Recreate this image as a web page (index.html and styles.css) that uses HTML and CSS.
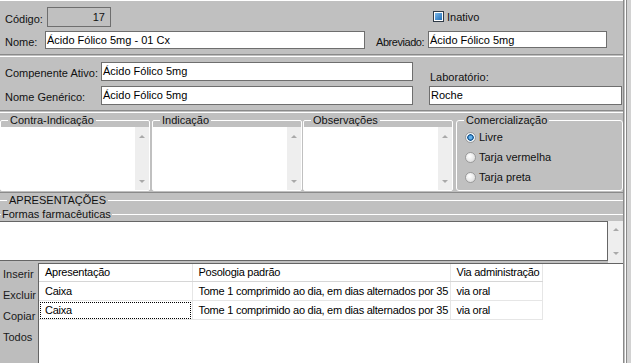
FILE: index.html
```html
<!DOCTYPE html>
<html lang="pt-BR">
<head>
    <meta charset="UTF-8">
    <title>Cadastro de Produto</title>
    <link rel="stylesheet" href="styles.css">
</head>
<body>
    <div class="window">
        <div class="form">
            <!-- dados principais -->
            <div class="panel panel-head">
                <div class="row row-code">
                    <span class="lbl code-lbl">Código:</span>
                    <div class="code-box">17</div>
                    <div class="check">
                        <span class="check-box"><span class="check-fill"></span></span>
                        <span>Inativo</span>
                    </div>
                </div>
                <div class="row row-name">
                    <span class="lbl name-lbl">Nome:</span>
                    <div class="input name-in">Ácido Fólico 5mg - 01 Cx</div>
                    <span class="lbl abrev-lbl">Abreviado:</span>
                    <div class="input abrev-in">Ácido Fólico 5mg</div>
                </div>
            </div>

            <div class="panel panel-mid">
                <span class="lbl">Compenente Ativo:</span>
                <div class="input">Ácido Fólico 5mg</div>
                <span></span>
                <span class="lbl lab-lbl">Laboratório:</span>
                <span class="lbl">Nome Genérico:</span>
                <div class="input">Ácido Fólico 5mg</div>
                <span></span>
                <div class="input">Roche</div>
            </div>

            <div class="panel panel-groups">
                <fieldset class="group g-contra">
                    <legend>Contra-Indicação</legend>
                    <div class="memo">
                        <div class="memo-text"></div>
                        <div class="vscroll"><span class="arrow-up"></span><span class="arrow-down"></span></div>
                    </div>
                </fieldset>
                <fieldset class="group g-ind">
                    <legend>Indicação</legend>
                    <div class="memo">
                        <div class="memo-text"></div>
                        <div class="vscroll"><span class="arrow-up"></span><span class="arrow-down"></span></div>
                    </div>
                </fieldset>
                <fieldset class="group g-obs">
                    <legend>Observações</legend>
                    <div class="memo">
                        <div class="memo-text"></div>
                        <div class="vscroll"><span class="arrow-up"></span><span class="arrow-down"></span></div>
                    </div>
                </fieldset>
                <fieldset class="group g-com">
                    <legend>Comercialização</legend>
                    <div class="radios">
                        <div class="radio-row"><span class="radio on"></span>Livre</div>
                        <div class="radio-row"><span class="radio"></span>Tarja vermelha</div>
                        <div class="radio-row"><span class="radio"></span>Tarja preta</div>
                    </div>
                </fieldset>
            </div>

            <!-- apresentações -->
            <fieldset class="line-group apres">
                <legend>APRESENTAÇÕES</legend>
                <fieldset class="line-group formas">
                    <legend>Formas farmacêuticas</legend>
                    <div class="formas-row">
                        <div class="formas-memo"></div>
                        <div class="vscroll wide"><span class="arrow-up"></span><span class="arrow-down"></span></div>
                    </div>
                </fieldset>
            </fieldset>

            <div class="lists">
                <div class="actions">
                    <div>Inserir</div>
                    <div>Excluir</div>
                    <div>Copiar</div>
                    <div>Todos</div>
                </div>
                <div class="grid">
                    <table>
                        <colgroup>
                            <col class="c1">
                            <col class="c2">
                            <col class="c3">
                            <col>
                        </colgroup>
                        <thead>
                            <tr>
                                <th>Apresentação</th>
                                <th>Posologia padrão</th>
                                <th>Via administração</th>
                                <th class="blank"></th>
                            </tr>
                        </thead>
                        <tbody>
                            <tr>
                                <td>Caixa</td>
                                <td>Tome 1 comprimido ao dia, em dias alternados por 35</td>
                                <td>via oral</td>
                                <td class="blank"></td>
                            </tr>
                            <tr>
                                <td class="focus">Caixa</td>
                                <td>Tome 1 comprimido ao dia, em dias alternados por 35</td>
                                <td>via oral</td>
                                <td class="blank"></td>
                            </tr>
                        </tbody>
                    </table>
                </div>
            </div>
        </div>
        <div class="edge"></div>
    </div>
</body>
</html>
```

FILE: styles.css
```css
* {
    margin: 0;
    padding: 0;
    box-sizing: border-box;
}

body {
    width: 631px;
    height: 363px;
    overflow: hidden;
    background: #c0c0c0;
    font-family: 'Liberation Sans', Arial, sans-serif;
    font-size: 11px;
    color: #111;
}

.window {
    display: flex;
    height: 363px;
}

.form {
    width: 624px;
    display: flex;
    flex-direction: column;
    border-right: 1px solid #8a8a8a;
}

.edge {
    width: 7px;
    background: linear-gradient(to right, #c0c0c0 0 1px, #fff 1px 2px, #8a8a8a 2px 3px, #d2d2d2 3px);
}

.panel {
    border-top: 1px solid #fff;
    border-bottom: 1px solid #8a8a8a;
    margin-bottom: 1px;
}

.row {
    display: flex;
}

.lbl {
    line-height: 13px;
    padding-top: 4px;
    align-self: center;
    white-space: nowrap;
}

.input {
    background: #fff;
    border: 1px solid #6e6e6e;
    padding-left: 1px;
    line-height: 16px;
    white-space: nowrap;
    overflow: hidden;
    color: #000;
}

/* topo */
.panel-head {
    height: 55px;
    padding: 6px 0 0 5px;
}

.row-code {
    height: 20px;
}

.code-lbl {
    width: 42px;
}

.code-box {
    width: 64px;
    border: 1px solid #6e6e6e;
    text-align: right;
    padding-right: 5px;
    line-height: 18px;
}

.check {
    margin-left: 322px;
    margin-top: 4px;
    height: 11px;
    display: flex;
    align-items: center;
    gap: 3px;
    align-self: flex-start;
}

.check-box {
    width: 11px;
    height: 11px;
    border: 1px solid #2f3a46;
    background: #fff;
    padding: 1px;
    display: block;
}

.check-fill {
    display: block;
    width: 7px;
    height: 7px;
    background: linear-gradient(135deg, #7bb8ea, #1f6db5);
}

.row-name {
    height: 18px;
    margin-top: 4px;
}

.name-lbl {
    width: 40px;
}

.name-in {
    width: 320px;
}

.abrev-lbl {
    margin-left: 11px;
    width: 52px;
    letter-spacing: -0.45px;
}

.abrev-in {
    width: 179px;
    height: 17px;
    align-self: flex-start;
}

/* componente / laboratorio */
.panel-mid {
    height: 55px;
    display: grid;
    grid-template-columns: 96px 312px 16px 193px;
    grid-template-rows: 19px 19px;
    row-gap: 5px;
    padding: 5px 0 0 5px;
}

.lab-lbl {
    align-self: end;
    margin-bottom: -3px;
    padding-left: 1px;
}

/* caixas de grupo */
.panel-groups {
    height: 81px;
    display: flex;
    align-items: flex-start;
    padding-top: 1px;
}

.group {
    border: 1px solid #fff;
    border-radius: 2px;
    min-width: 0;
}

.group legend {
    margin-left: 7px;
    padding: 0 2px;
    line-height: 13px;
}

.g-contra,
.g-ind,
.g-obs {
    width: 150px;
}

.g-contra {
    margin-right: 2px;
}

.g-ind {
    margin-right: 1px;
}

.g-obs {
    margin-right: 3px;
}

.g-com {
    width: 167px;
    border-radius: 3px;
}

.memo {
    display: flex;
    height: 63px;
    background: #fff;
}

.memo-text {
    flex: 1;
}

.vscroll {
    width: 14px;
    background: #eeeeee;
    display: flex;
    flex-direction: column;
    align-items: center;
    justify-content: space-between;
    padding: 8px 0 7px;
}

.vscroll.wide {
    width: 15px;
    height: 43px;
    padding: 7px 0 9px;
}

.arrow-up,
.arrow-down {
    width: 0;
    height: 0;
    border-left: 3px solid transparent;
    border-right: 3px solid transparent;
}

.arrow-up {
    border-bottom: 3px solid #a9a9a9;
}

.arrow-down {
    border-top: 3px solid #a9a9a9;
}

.radios {
    height: 63px;
    padding-left: 8px;
}

.radio-row {
    height: 20px;
    display: flex;
    align-items: center;
    gap: 3px;
}

.radio {
    width: 11px;
    height: 11px;
    border-radius: 50%;
    border: 1px solid #9a9a9a;
    background: radial-gradient(circle at 40% 35%, #ffffff, #d6d6d6);
}

.radio.on {
    background: radial-gradient(circle, #5fb0ee 0 1.5px, #1a5a94 2.5px 3px, #eef3f7 3.5px);
}

/* apresentacoes */
.line-group {
    border: none;
    border-top: 1px solid #fff;
    min-width: 0;
}

.line-group legend {
    line-height: 13px;
}

.apres > legend {
    margin-left: 7px;
    padding: 0 2px;
}

.formas {
    margin-top: 1px;
}

.formas > legend {
    margin-left: 1px;
    padding: 0 1px;
}

.formas-row {
    display: flex;
    align-items: flex-start;
    height: 40px;
}

.formas-memo {
    width: 608px;
    height: 40px;
    background: #fff;
    border: 1px solid #666;
    border-left: none;
}

.lists {
    flex: 1;
    display: flex;
    margin-top: 2px;
}

.actions {
    width: 38px;
    background: #bdbdbd;
    padding: 1px 0 0 3px;
    line-height: 21px;
    color: #1a1a1a;
}

.grid {
    flex: 1;
    background: #fff;
    border-top: 1px solid #646464;
    border-left: 1px solid #646464;
    overflow: hidden;
}

table {
    border-collapse: collapse;
    table-layout: fixed;
    width: 100%;
}

.c1 {
    width: 153px;
}

.c2 {
    width: 258px;
}

.c3 {
    width: 92px;
}

th,
td {
    text-align: left;
    font-weight: normal;
    white-space: nowrap;
    overflow: hidden;
    padding-left: 6px;
    letter-spacing: -0.25px;
    border-right: 1px solid #e6e6e6;
    border-bottom: 1px solid #e6e6e6;
    color: #000;
}

th {
    line-height: 17px;
    border-bottom-color: #d6d6d6;
}

td {
    line-height: 18px;
}

th.blank,
td.blank {
    border: none;
}

td.focus {
    outline: 1px dotted #000;
    outline-offset: -2px;
}
```
